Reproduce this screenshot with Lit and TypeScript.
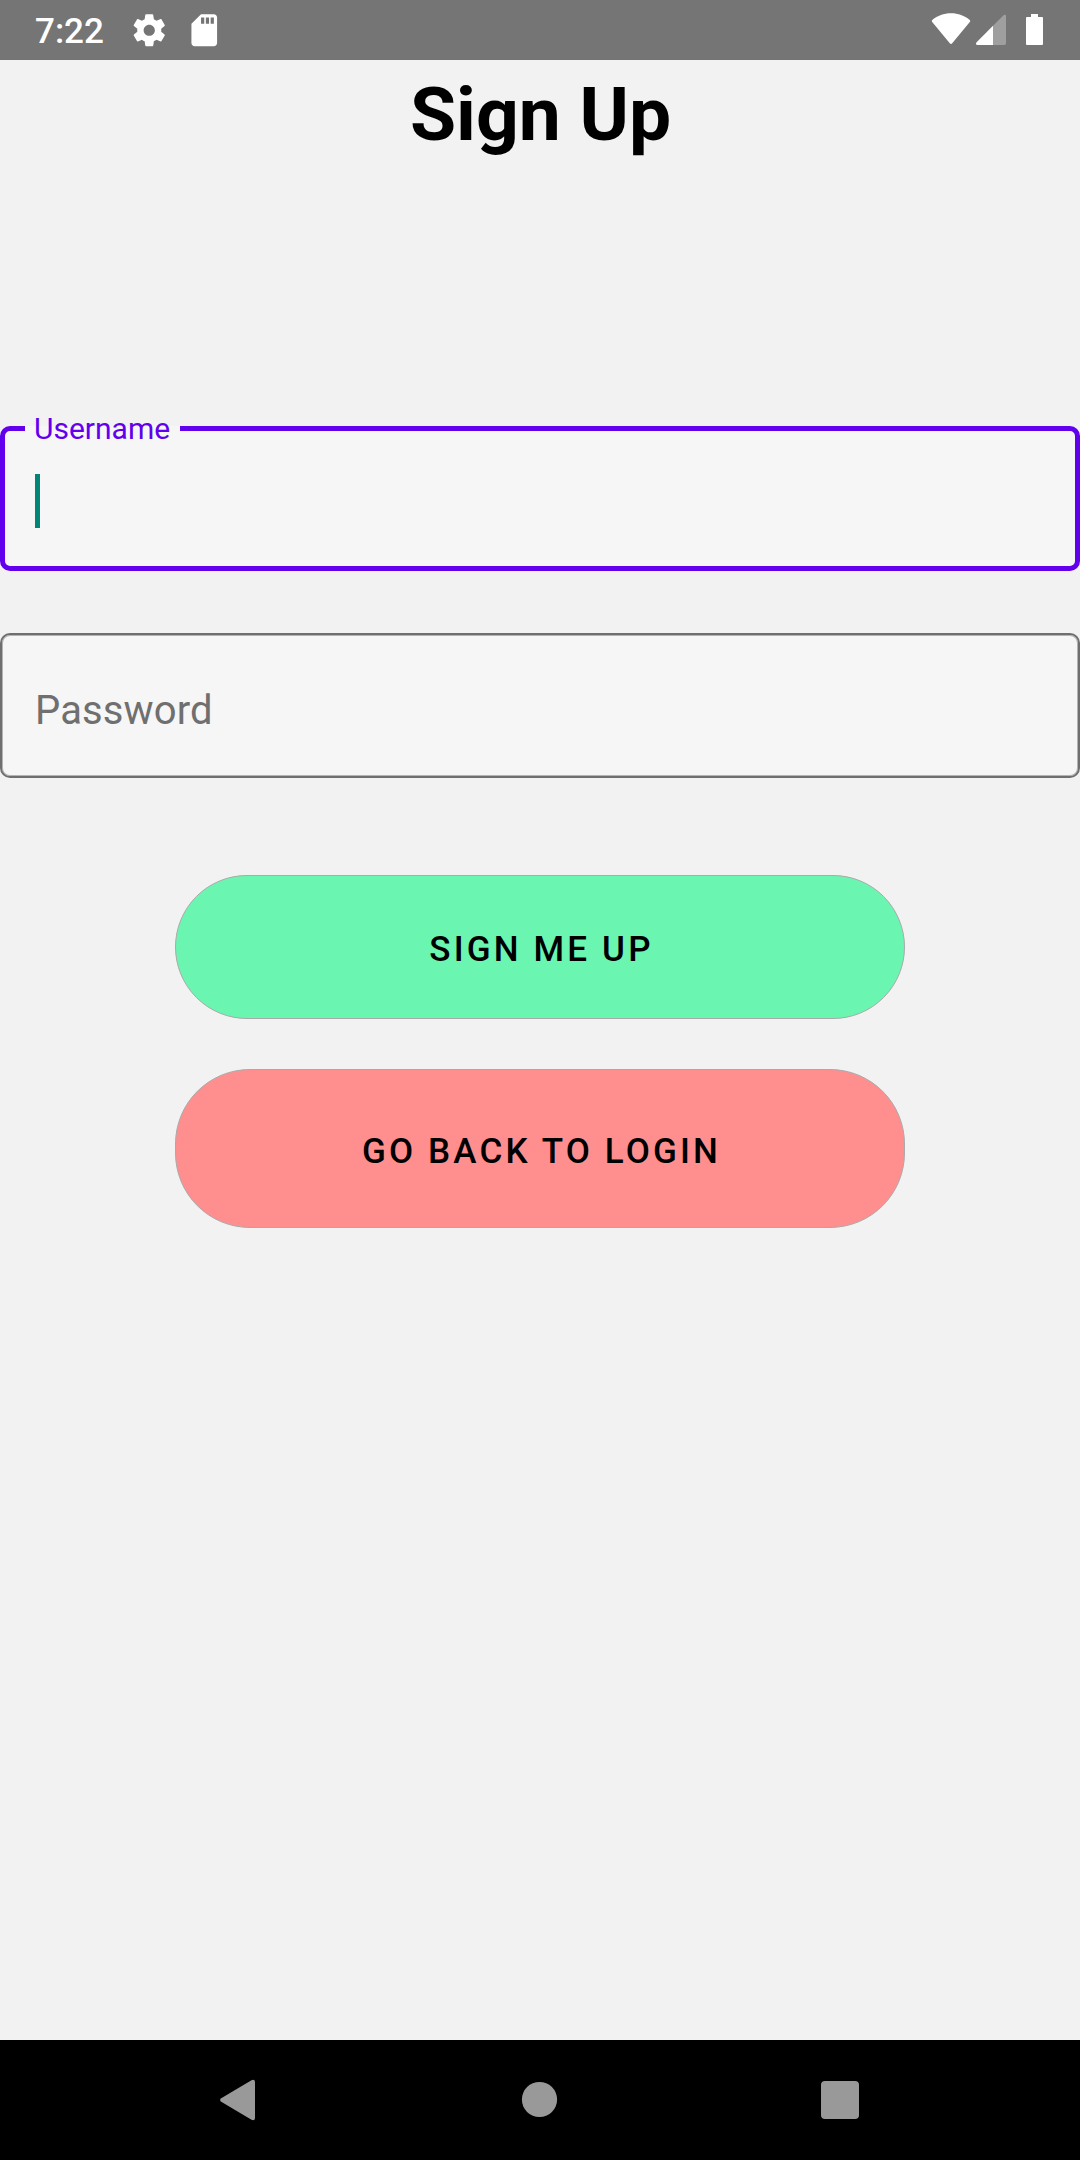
import { LitElement, html, css } from "lit";
import { customElement, property } from "lit/decorators.js";

@customElement("status-bar")
class StatusBar extends LitElement {
  static styles = css`
    :host { display: flex; justify-content: space-between; box-sizing: border-box; height: 60px; padding: 0 37px 0 35px; background: #757575; color: #fff; }
    .side { display: flex; align-items: flex-start; }
    .time { font: 500 35px/60px Roboto, sans-serif; width: 70px; padding-top: 2px; height: 58px; }
    svg { display: block; flex: none; fill: #fff; }
    .gear { margin: 11px 0 0 25px; }
    .card { margin: 11px 0 0 16px; }
    .wifi { margin-top: 13px; }
    .signal { margin: 14px 0 0 5px; }
    .battery { margin: 14px 0 0 19px; }
    .dim { fill: #9f9f9f; }
  `;
  render() {
    return html`
      <div class="side">
        <span class="time">7:22</span>
        <svg class="gear" width="38.5" height="38.5" viewBox="0 0 24 24"><path d="M19.43 12.98c.04-.32.07-.64.07-.98s-.03-.66-.07-.98l2.11-1.65c.19-.15.24-.42.12-.64l-2-3.46c-.12-.22-.39-.3-.61-.22l-2.49 1c-.52-.4-1.08-.73-1.69-.98l-.38-2.65C14.46 2.18 14.25 2 14 2h-4c-.25 0-.46.18-.49.42l-.38 2.65c-.61.25-1.17.59-1.69.98l-2.49-1c-.23-.09-.49 0-.61.22l-2 3.46c-.13.22-.07.49.12.64l2.11 1.65c-.04.32-.07.65-.07.98s.03.66.07.98l-2.11 1.65c-.19.15-.24.42-.12.64l2 3.46c.12.22.39.3.61.22l2.49-1c.52.4 1.08.73 1.69.98l.38 2.65c.03.24.24.42.49.42h4c.25 0 .46-.18.49-.42l.38-2.65c.61-.25 1.17-.59 1.69-.98l2.49 1c.23.09.49 0 .61-.22l2-3.46c.12-.22.07-.49-.12-.64l-2.11-1.65zM12 15.5c-1.93 0-3.500-1.570-3.500-3.500s1.570-3.500 3.500-3.500 3.500 1.570 3.500 3.500-1.570 3.500-3.500 3.500z"/></svg>
        <svg class="card" width="38.5" height="38.5" viewBox="0 0 24 24"><path d="M18 2h-8L4.020 8 4 20c0 1.100.9 2 2 2h12c1.100 0 2-.9 2-2V4c0-1.100-.9-2-2-2zm-6 6h-2V4h2v4zm3 0h-2V4h2v4zm3 0h-2V4h2v4z"/></svg>
      </div>
      <div class="side">
        <svg class="wifi" width="40" height="32" viewBox="0 0 40 32"><path d="M1 8.800Q0.300 7.600 1.500 6.700C6.500 2.600 12.800 0.200 20 0.200S33.500 2.600 38.500 6.700Q39.700 7.600 39 8.800L21.200 30.200Q20 31.600 18.800 30.200Z"/></svg>
        <svg class="signal" width="31" height="31" viewBox="0 0 31 31"><path class="dim" d="M17 11.700 27.800 1.100Q30 0 30 2V29Q30 31 28.500 31H17Z"/><path d="M17 11.700V31H1.500Q-1 30.500.6 28.200Z"/></svg>
        <svg class="battery" width="17" height="31" viewBox="0 0 17 31"><path d="M5 0H12V3H16Q17 3 17 4V30Q17 31 16 31H1Q0 31 0 30V4Q0 3 1 3H5Z"/></svg>
      </div>`;
  }
}

@customElement("outlined-field")
class OutlinedField extends LitElement {
  @property() label = "";
  @property({ type: Boolean }) focused = false;
  static styles = css`
    :host { display: block; font-family: Roboto, sans-serif; }
    .box { position: relative; box-sizing: border-box; height: 145px; border-radius: 10px; background: #f6f6f6; display: flex; }
    .idle { border: 2px solid #6f6f6f; box-shadow: inset 0 0 0 1px #b3b3b3; padding: 51px 33px 0; }
    .active { border: 5px solid #6200ee; padding: 43px 30px 0; }
    .hint { font-size: 40px; line-height: 50px; letter-spacing: 0.12px; color: #6f6f6f; }
    .tag { position: absolute; left: 20px; top: -5px; width: 155px; height: 5px; background: #f6f6f6; }
    .float { position: absolute; left: 9px; top: -17px; font-size: 30px; line-height: 40px; color: #6200ee; }
    .caret { width: 5px; height: 54px; background: #008577; }
  `;
  render() {
    return this.focused
      ? html`<div class="box active"><span class="tag"><span class="float">${this.label}</span></span><span class="caret"></span></div>`
      : html`<div class="box idle"><span class="hint">${this.label}</span></div>`;
  }
}

@customElement("nav-bar")
class NavBar extends LitElement {
  static styles = css`
    :host { display: flex; justify-content: space-between; align-items: center; box-sizing: border-box; height: 120px; padding: 0 220px; background: #000; }
    svg { display: block; fill: #999; }
  `;
  render() {
    return html`
      <svg width="40" height="42" viewBox="0 0 40 42"><path d="M1.200 19.200 31.500 1.200Q34.800 -.2 35 3V39Q34.800 42.200 31.500 40.800L1.200 22.800Q-1 21 1.200 19.200Z"/></svg>
      <svg width="40" height="40" viewBox="0 0 40 40"><circle cx="19.500" cy="19.500" r="17.600"/></svg>
      <svg width="40" height="40" viewBox="0 0 40 40"><rect x="1" y="1" width="38" height="38" rx="4"/></svg>`;
  }
}

@customElement("app-root")
class AppRoot extends LitElement {
  static styles = css`
    :host { display: flex; flex-direction: column; height: 2160px; background: #f2f2f2; font-family: Roboto, sans-serif; color: #000; }
    .page { flex: 1; display: flex; flex-direction: column; }
    h1 { margin: 10px 0 268px; padding-left: 1px; text-align: center; font-size: 75px; line-height: 88px; font-weight: 700; }
    .fields { display: flex; flex-direction: column; gap: 62px; }
    .actions { display: flex; flex-direction: column; align-items: center; gap: 50px; margin-top: 97px; }
    button { box-sizing: border-box; width: 730px; border: 1px solid #aaa; padding: 6px 0 0 3px; font: 500 35px/42px Roboto, sans-serif; letter-spacing: 3.15px; color: #000; text-transform: uppercase; border-radius: 75px; }
    .go { height: 144px; background: #6af6b0; }
    .back { height: 159px; background: #ff8e8f; }
  `;
  render() {
    return html`
      <status-bar></status-bar>
      <main class="page">
        <h1>Sign Up</h1>
        <div class="fields">
          <outlined-field label="Username" focused></outlined-field>
          <outlined-field label="Password"></outlined-field>
        </div>
        <div class="actions">
          <button class="go">Sign me up</button>
          <button class="back">Go back to login</button>
        </div>
      </main>
      <nav-bar></nav-bar>`;
  }
}
